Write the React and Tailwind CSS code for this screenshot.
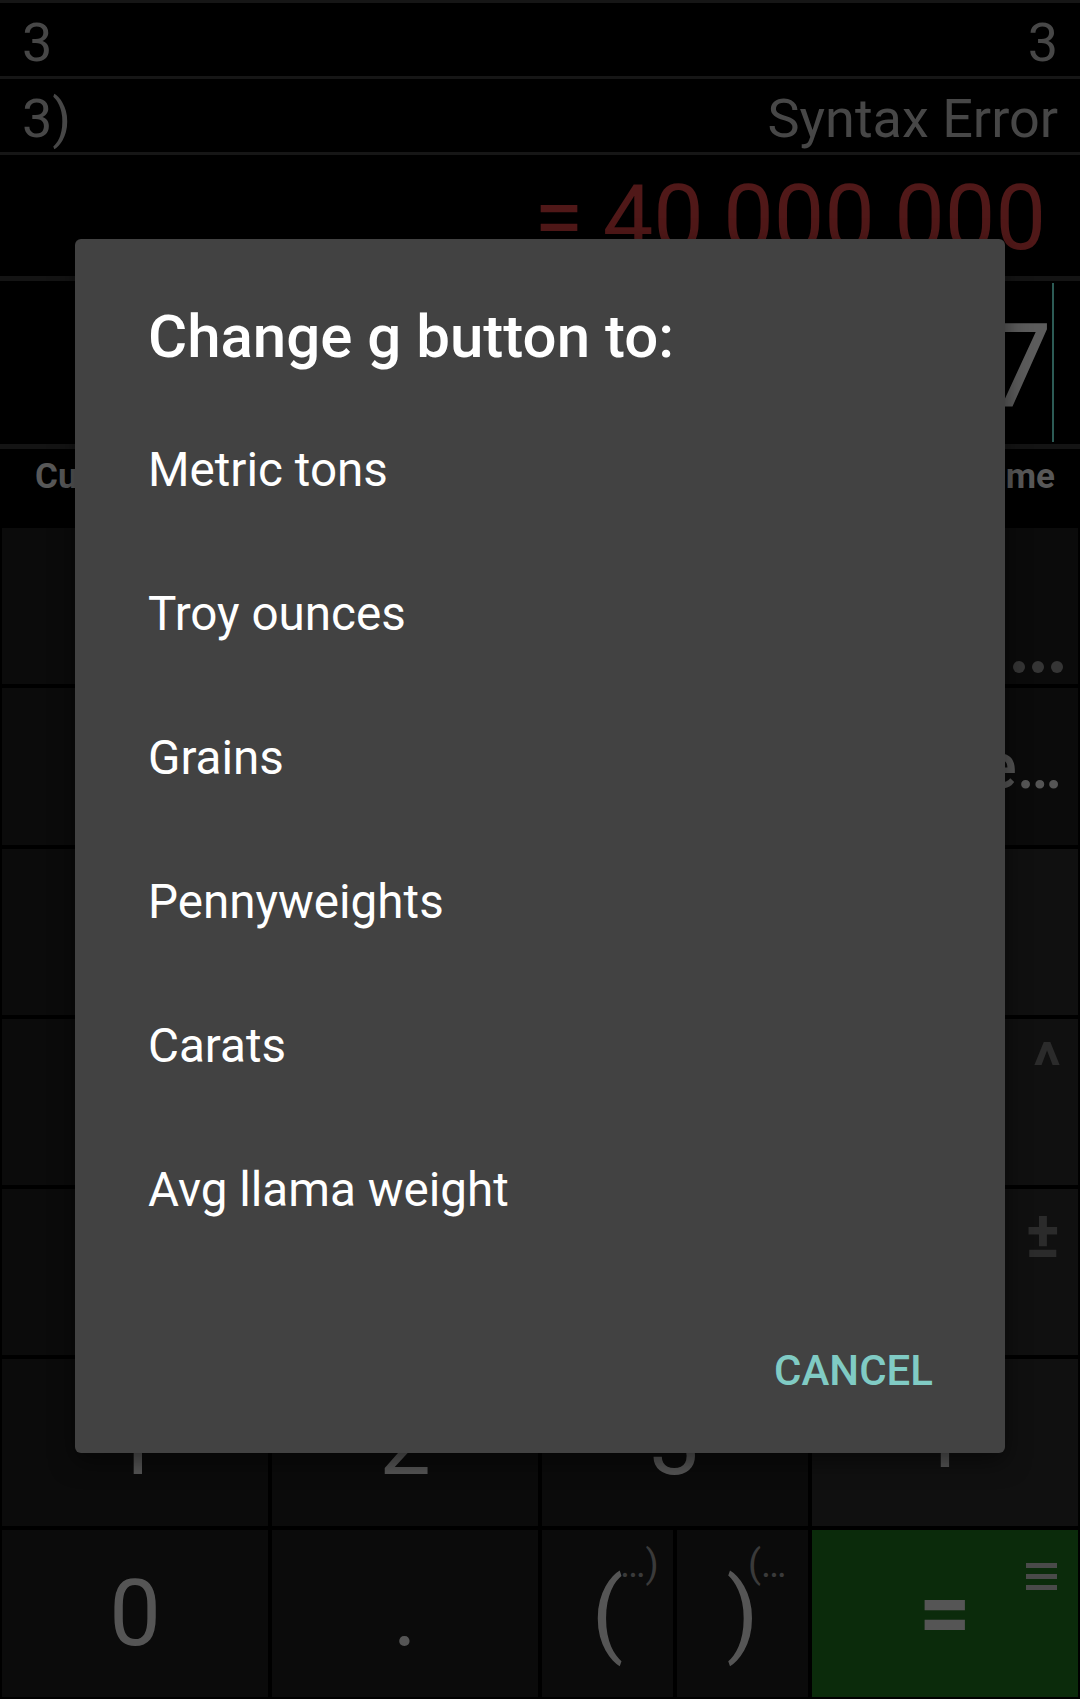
import { useState } from 'react'

// Colours are taken as they appear under the dialog's dim scrim.
const history = [
  { expr: '3', result: '3' },
  { expr: '3)', result: 'Syntax Error' },
]

const units = ['Metric tons', 'Troy ounces', 'Grains', 'Pennyweights', 'Carats', 'Avg llama weight']

function Sup({ children, className }) {
  return (
    <span className={`absolute leading-none font-bold text-[64px] text-[#2b2b2b] ${className}`}>{children}</span>
  )
}

function Key({ label, className = '', children, size = 'text-[92px]' }) {
  return (
    <div className={`relative flex items-center justify-center overflow-hidden bg-[#0b0b0b] ${className}`}>
      {label && <span className={`${size} leading-none text-[#555555]`}>{label}</span>}
      {children}
    </div>
  )
}

function Keypad() {
  return (
    <div className="grid grid-cols-4 grid-rows-[156px_157px_166px_166px_166px_167px_167px] gap-[4px] px-[2px] pb-[2px]">
      <Key label="mg" size="text-[64px]" />
      <Key label="g" size="text-[64px]" />
      <Key label="kg" size="text-[64px]" />
      <Key label="lb" size="text-[64px]">
        <div className="absolute bottom-[11px] right-[15px] flex gap-[7px]">
          {[0, 1, 2].map(i => (
            <div key={i} className="w-[12px] h-[12px] rounded-full bg-[#353535]" />
          ))}
        </div>
      </Key>

      <Key label="oz" size="text-[64px]" />
      <Key label="st" size="text-[64px]" />
      <Key label="ct" size="text-[64px]" />
      <div className="flex items-center justify-end overflow-hidden bg-[#0b0b0b] pr-[16px]">
        <span className="whitespace-nowrap text-[64px] leading-none font-medium text-[#555555]">Change…</span>
      </div>

      <Key label="√" />
      <Key label="π" />
      <Key label="%" />
      <Key label="÷" className="bg-[#101010]" />

      <Key label="7" />
      <Key label="8" />
      <Key label="9" />
      <Key label="×" className="bg-[#101010]">
        <Sup className="top-[16px] right-[17px]">^</Sup>
      </Key>

      <Key label="4" />
      <Key label="5" />
      <Key label="6" />
      <Key label="−" className="bg-[#101010]">
        <Sup className="top-[15px] right-[18px]">±</Sup>
      </Key>

      <Key label="1" />
      <Key label="2" />
      <Key label="3" />
      <Key label="+" className="bg-[#101010]" />

      <Key label="0" />
      <Key label="." />
      <div className="grid grid-cols-2 gap-[4px]">
        <Key label="(">
          <span className="absolute top-[15px] left-[78px] text-[38px] leading-none text-[#3a3a3a]">…)</span>
        </Key>
        <Key label=")">
          <span className="absolute top-[15px] left-[71px] text-[38px] leading-none text-[#3a3a3a]">(…</span>
        </Key>
      </div>
      <div className="relative flex items-center justify-center bg-[#0b2b0b]">
        <span className="text-[92px] leading-none font-bold text-[#555555]">=</span>
        <div className="absolute top-[33px] right-[21px] flex flex-col gap-[6px]">
          <div className="w-[31px] h-[5px] bg-[#4a4a4a]" />
          <div className="w-[31px] h-[5px] bg-[#4a4a4a]" />
          <div className="w-[31px] h-[5px] bg-[#4a4a4a]" />
        </div>
      </div>
    </div>
  )
}

function UnitDialog({ onPick }) {
  return (
    <div className="absolute left-[75px] top-[239px] w-[930px] h-[1214px] rounded-[6px] bg-[#424242] shadow-[0_8px_24px_rgba(0,0,0,0.5)] flex flex-col">
      <div className="pt-[62px] px-[73px] text-[60px] leading-[72px] font-medium text-white">Change g button to:</div>
      <div className="mt-[26px] flex flex-col">
        {units.map(u => (
          <button
            key={u}
            onClick={() => onPick(u)}
            className="h-[144px] flex items-center px-[73px] text-left text-[47.6px] leading-none text-white"
          >
            {u}
          </button>
        ))}
      </div>
      <div className="flex justify-end pt-[87px] pr-[72px]">
        <button className="text-[42px] leading-[42px] font-medium text-[#80cbc4]">CANCEL</button>
      </div>
    </div>
  )
}

export default function App() {
  const [, setUnit] = useState(null)

  return (
    <div className="relative w-[1080px] h-[1699px] overflow-hidden bg-black font-['Roboto',sans-serif]">
      <div className="flex flex-col">
        <div className="h-[3px] bg-[#161616]" />
        {history.map((h, i) => (
          <div key={i}>
            <div className="h-[73px] flex items-center justify-between pt-[6px] pl-[22px] pr-[22px] text-[54px] leading-none text-[#474747]">
              <span>{h.expr}</span>
              <span>{h.result}</span>
            </div>
            <div className="h-[3px] bg-[#161616]" />
          </div>
        ))}

        <div className="h-[121px] flex items-center justify-end pt-[6px] pr-[34px] text-[90px] leading-none text-[#501818] whitespace-nowrap [word-spacing:-3px]">
          = 40 000 000
        </div>
        <div className="h-[5px] bg-[#141414]" />

        <div className="h-[163px] flex justify-end pr-[26px] py-[2px]">
          <div className="flex items-center pt-[10px] text-[117px] leading-none text-[#5c5c5c]">7</div>
          <div className="w-[2px] bg-[#2c5b55]" />
        </div>
        <div className="h-[5px] bg-[#141414]" />

        <div className="h-[79px] flex items-start justify-between pt-[10px] pl-[35px] pr-[25px] text-[35px] leading-[35px] font-bold text-[#585858]">
          <span>Custom</span>
          <span>Volume</span>
        </div>

        <Keypad />
      </div>

      <UnitDialog onPick={setUnit} />
    </div>
  )
}
